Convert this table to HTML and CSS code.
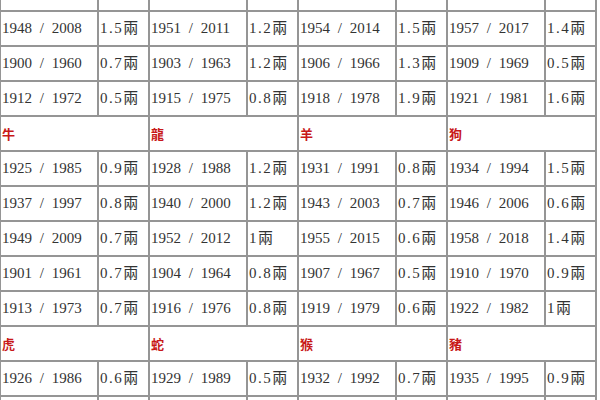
FILE: index.html
```html
<!DOCTYPE html>
<html lang="zh-Hant">
<head>
<meta charset="utf-8">
<title>稱骨歌 年份重量表</title>
<link rel="stylesheet" href="styles.css">
</head>
<body>
<table class="bone">
  <colgroup>
    <col class="cy"><col class="cw">
    <col class="cy"><col class="cw">
    <col class="cy"><col class="cw">
    <col class="cy"><col class="cw">
  </colgroup>
  <tbody>
    <tr class="edge"><td></td><td></td><td></td><td></td><td></td><td></td><td></td><td></td></tr>
    <tr><td class="y">1948 / 2008</td><td class="w">1.5兩</td><td class="y">1951 / 2011</td><td class="w">1.2兩</td><td class="y">1954 / 2014</td><td class="w">1.5兩</td><td class="y">1957 / 2017</td><td class="w">1.4兩</td></tr>
    <tr><td class="y">1900 / 1960</td><td class="w">0.7兩</td><td class="y">1903 / 1963</td><td class="w">1.2兩</td><td class="y">1906 / 1966</td><td class="w">1.3兩</td><td class="y">1909 / 1969</td><td class="w">0.5兩</td></tr>
    <tr><td class="y">1912 / 1972</td><td class="w">0.5兩</td><td class="y">1915 / 1975</td><td class="w">0.8兩</td><td class="y">1918 / 1978</td><td class="w">1.9兩</td><td class="y">1921 / 1981</td><td class="w">1.6兩</td></tr>
    <tr class="head"><td colspan="2">牛</td><td colspan="2">龍</td><td colspan="2">羊</td><td colspan="2">狗</td></tr>
    <tr><td class="y">1925 / 1985</td><td class="w">0.9兩</td><td class="y">1928 / 1988</td><td class="w">1.2兩</td><td class="y">1931 / 1991</td><td class="w">0.8兩</td><td class="y">1934 / 1994</td><td class="w">1.5兩</td></tr>
    <tr><td class="y">1937 / 1997</td><td class="w">0.8兩</td><td class="y">1940 / 2000</td><td class="w">1.2兩</td><td class="y">1943 / 2003</td><td class="w">0.7兩</td><td class="y">1946 / 2006</td><td class="w">0.6兩</td></tr>
    <tr><td class="y">1949 / 2009</td><td class="w">0.7兩</td><td class="y">1952 / 2012</td><td class="w">1兩</td><td class="y">1955 / 2015</td><td class="w">0.6兩</td><td class="y">1958 / 2018</td><td class="w">1.4兩</td></tr>
    <tr><td class="y">1901 / 1961</td><td class="w">0.7兩</td><td class="y">1904 / 1964</td><td class="w">0.8兩</td><td class="y">1907 / 1967</td><td class="w">0.5兩</td><td class="y">1910 / 1970</td><td class="w">0.9兩</td></tr>
    <tr><td class="y">1913 / 1973</td><td class="w">0.7兩</td><td class="y">1916 / 1976</td><td class="w">0.8兩</td><td class="y">1919 / 1979</td><td class="w">0.6兩</td><td class="y">1922 / 1982</td><td class="w">1兩</td></tr>
    <tr class="head"><td colspan="2">虎</td><td colspan="2">蛇</td><td colspan="2">猴</td><td colspan="2">豬</td></tr>
    <tr><td class="y">1926 / 1986</td><td class="w">0.6兩</td><td class="y">1929 / 1989</td><td class="w">0.5兩</td><td class="y">1932 / 1992</td><td class="w">0.7兩</td><td class="y">1935 / 1995</td><td class="w">0.9兩</td></tr>
    <tr class="edge"><td></td><td></td><td></td><td></td><td></td><td></td><td></td><td></td></tr>
  </tbody>
</table>
</body>
</html>
```
FILE: styles.css
```css
html, body {
  margin: 0;
  padding: 0;
  background: #ffffff;
  overflow: hidden;
}

.bone {
  border-collapse: collapse;
  table-layout: fixed;
  width: 598px;
  margin: -25px 0 0 -1px;
  font-family: "Liberation Serif", "Noto Sans CJK TC", serif;
  font-size: 15px;
  color: #333333;
}

.cy { width: 98px; }
.cw { width: 51px; }

.bone td {
  border: 2px solid #959595;
  height: 33px;
  padding: 0 0 0 1px;
  vertical-align: middle;
  white-space: nowrap;
  overflow: hidden;
  line-height: 1;
}

.bone td.y {
  word-spacing: 4px;
}

.bone td.w {
  letter-spacing: 1.5px;
}

.bone tr.head td {
  color: #c81818;
  font-weight: bold;
  font-size: 13px;
  font-family: "Noto Sans CJK TC", sans-serif;
}
```
